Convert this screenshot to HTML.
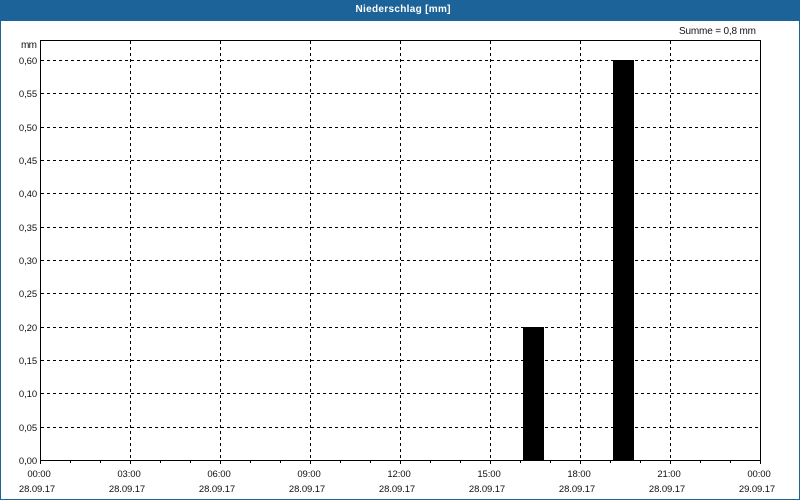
<!DOCTYPE html>
<html>
<head>
<meta charset="utf-8">
<style>
html,body{margin:0;padding:0;background:#fff;width:800px;height:500px;overflow:hidden}
svg{display:block}
text{font-family:"Liberation Sans",sans-serif;font-size:9.5px;letter-spacing:-0.1px;fill:#111}
.y text{text-anchor:end}
.x text{text-anchor:middle}
</style>
</head>
<body>
<svg width="800" height="500" viewBox="0 0 800 500" xmlns="http://www.w3.org/2000/svg">
<rect width="800" height="500" fill="#fff"/>
<g shape-rendering="crispEdges">
<rect x="0" y="0" width="800" height="21" fill="#1c6399"/>
<rect x="0" y="21" width="1" height="479" fill="#1c6399"/>
<rect x="799" y="21" width="1" height="479" fill="#1c6399"/>
<rect x="0" y="499" width="800" height="1" fill="#1c6399"/>

<g stroke="#000" stroke-width="1" stroke-dasharray="3 3" fill="none">
<path d="M41 60.5H760M41 93.5H760M41 127.5H760M41 160.5H760M41 193.5H760M41 227.5H760M41 260.5H760M41 293.5H760M41 327.5H760M41 360.5H760M41 393.5H760M41 427.5H760"/>
<path d="M130.5 41V460M220.5 41V460M310.5 41V460M400.5 41V460M490.5 41V460M580.5 41V460M670.5 41V460"/>
</g>

<rect x="523" y="327" width="21" height="133" fill="#000"/>
<rect x="613" y="60" width="21" height="400" fill="#000"/>

<rect x="40.5" y="40.5" width="720" height="420" fill="none" stroke="#000" stroke-width="1"/>
<path stroke="#000" fill="none" d="M40.5 460V464M70.5 460V463M100.5 460V463M130.5 460V464M160.5 460V463M190.5 460V463M220.5 460V464M250.5 460V463M280.5 460V463M310.5 460V464M340.5 460V463M370.5 460V463M400.5 460V464M430.5 460V463M460.5 460V463M490.5 460V464M520.5 460V463M550.5 460V463M580.5 460V464M610.5 460V463M640.5 460V463M670.5 460V464M700.5 460V463M730.5 460V463M760.5 460V464"/>
</g>

<text x="403" y="12" text-anchor="middle" style="font-weight:bold;fill:#fff;font-size:10px;letter-spacing:0" textLength="95">Niederschlag [mm]</text>
<text x="679" y="34" textLength="77" style="font-size:10px;letter-spacing:0">Summe = 0,8 mm</text>
<text x="21" y="48" textLength="16" style="font-size:10px;letter-spacing:0">mm</text>

<g class="y">
<text x="37" y="64">0,60</text>
<text x="37" y="97">0,55</text>
<text x="37" y="131">0,50</text>
<text x="37" y="164">0,45</text>
<text x="37" y="197">0,40</text>
<text x="37" y="231">0,35</text>
<text x="37" y="264">0,30</text>
<text x="37" y="297">0,25</text>
<text x="37" y="331">0,20</text>
<text x="37" y="364">0,15</text>
<text x="37" y="397">0,10</text>
<text x="37" y="431">0,05</text>
<text x="37" y="464">0,00</text>
</g>

<g class="x">
<text x="39" y="477">00:00</text><text x="37" y="492">28.09.17</text>
<text x="129" y="477">03:00</text><text x="127" y="492">28.09.17</text>
<text x="219" y="477">06:00</text><text x="217" y="492">28.09.17</text>
<text x="309" y="477">09:00</text><text x="307" y="492">28.09.17</text>
<text x="399" y="477">12:00</text><text x="397" y="492">28.09.17</text>
<text x="489" y="477">15:00</text><text x="487" y="492">28.09.17</text>
<text x="579" y="477">18:00</text><text x="577" y="492">28.09.17</text>
<text x="669" y="477">21:00</text><text x="667" y="492">28.09.17</text>
<text x="759" y="477">00:00</text><text x="757" y="492">29.09.17</text>
</g>
</svg>
</body>
</html>
